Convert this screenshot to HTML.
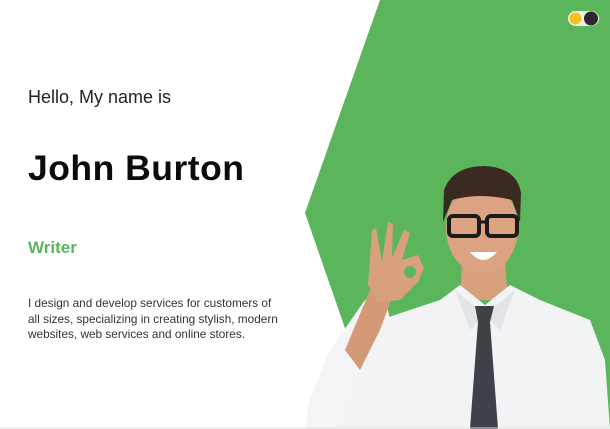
<!DOCTYPE html>
<html><head><meta charset="utf-8"><style>
html,body{margin:0;padding:0}
body{width:610px;height:429px;position:relative;overflow:hidden;background:#fff;font-family:"Liberation Sans",sans-serif}
.t{position:absolute;left:28px;white-space:nowrap}
</style></head><body>
<svg width="610" height="429" style="position:absolute;left:0;top:0">
<polygon points="380,0 610,0 610,429 380,429 305,213" fill="#5bb55a"/>
<rect x="568" y="11" width="31" height="15" rx="7.5" fill="#eef0ea"/>
<circle cx="575.5" cy="18.5" r="6" fill="#f5c21b"/>
<circle cx="591" cy="18.5" r="7" fill="#2b2630"/>
<path d="M462,262 L505,262 L508,300 L460,300 Z" fill="#d9a07e"/>
<path d="M330,429 L340,380 L380,320 L440,300 L460,285 L485,305 L510,285 L540,300 L590,320 L605,360 L610,429 Z" fill="#f2f3f5"/>
<path d="M455,290 L485,315 L470,330 Z M515,290 L485,315 L500,330 Z" fill="#e2e4e8"/>
<path d="M308,405 L330,350 L365,300 L385,295 L390,320 L360,370 L345,420 L330,429 L306,429 Z" fill="#f4f4f6"/>
<path d="M345,350 L370,290 L395,290 L380,330 L360,370 Z" fill="#d49a78"/>
<path d="M372,230 L376,228 L382,262 L388,222 L393,224 L392,258 L404,230 L410,233 L402,260 L418,255 L424,268 L418,282 L400,300 L378,302 L368,285 Z" fill="#d9a07e"/>
<circle cx="410" cy="272" r="6" fill="#5bb55a"/>
<path d="M475,306 L494,306 L490,322 L498,429 L470,429 L478,322 Z" fill="#3e4148"/>
<ellipse cx="482" cy="228" rx="36" ry="46" fill="#dba382"/>
<path d="M443,222 L444,190 Q453,166 485,166 Q517,168 521,193 L520,222 L512,200 Q480,192 452,200 Z" fill="#3a2a22"/>
<rect x="449" y="216" width="30" height="20" rx="4" fill="none" stroke="#1c1a1a" stroke-width="4"/>
<rect x="487" y="216" width="30" height="20" rx="4" fill="none" stroke="#1c1a1a" stroke-width="4"/>
<line x1="479" y1="222" x2="487" y2="222" stroke="#1c1a1a" stroke-width="3"/>
<path d="M470,252 Q483,268 497,252 Z" fill="#fff"/>
<line x1="0" y1="428" x2="610" y2="428" stroke="#e0e0e0"/>
</svg>
<div class="t" style="top:87px;font-size:18px;color:#222;font-weight:300">Hello, My name is</div>
<div class="t" style="top:148px;font-size:35.5px;font-weight:bold;color:#0b0b0b;letter-spacing:0.5px">John Burton</div>
<div class="t" style="top:238px;font-size:17px;font-weight:bold;color:#5bb55a">Writer</div>
<div class="t" style="top:296px;font-size:11.8px;line-height:15.5px;color:#333">I design and develop services for customers of<br>all sizes, specializing in creating stylish, modern<br>websites, web services and online stores.</div>
</body></html>
